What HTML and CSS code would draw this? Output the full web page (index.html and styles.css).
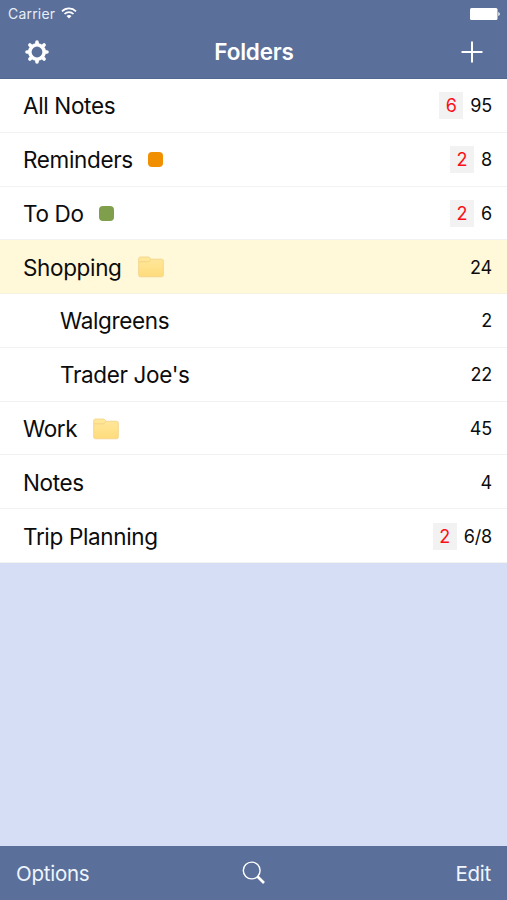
FILE: index.html
```html
<!DOCTYPE html>
<html lang="en">
<head>
<meta charset="utf-8">
<title>Folders</title>
<link rel="stylesheet" href="styles.css">
</head>
<body>
<svg class="defs" width="0" height="0" aria-hidden="true">
  <defs>
    <linearGradient id="folder-fill" x1="0" y1="0" x2="0" y2="1">
      <stop offset="0" stop-color="#ffe89c"/>
      <stop offset="1" stop-color="#ffdc7c"/>
    </linearGradient>
    <symbol id="folder" viewBox="0 0 26 22">
      <path d="M.7 19V2.7Q.7 1 2.4 1H10q1 0 1.600.6L13.200 3.200H23.500Q25.300 3.200 25.300 5V19q0 1.800-1.800 1.800H2.500Q.7 20.800.7 19Z" fill="url(#folder-fill)" stroke="#f3d48a" stroke-width=".9"/>
      <path d="M1 5.800H10.500L13 3.600" fill="none" stroke="#f0cf80" stroke-width=".8"/>
    </symbol>
  </defs>
</svg>
<div class="screen">
  <header class="top">
    <div class="status">
      <span class="carrier">Carrier</span>
      <svg class="wifi" width="16" height="12" viewBox="0 0 16 12" fill="none" stroke="#fff" stroke-width="1.700">
        <path d="M1 4.300a10 10 0 0 1 14 0M3.500 7a6.500 6.500 0 0 1 9 0"/>
        <path d="M5.500 9.100a3.700 3.700 0 0 1 5 0L8 11.600Z" fill="#fff" stroke="none"/>
      </svg>
      <svg class="battery" width="30" height="12" viewBox="0 0 30 12" fill="#fff">
        <rect x="0" y="0" width="27.500" height="12" rx="1.500"/>
        <path d="M28.300 4q1.500.4 1.500 2t-1.500 2Z"/>
      </svg>
    </div>
    <nav class="navbar">
      <svg class="gear" width="24" height="24" viewBox="-12 -12 24 24" fill="none" stroke="#fff">
        <circle r="7.200" stroke-width="3.600"/>
        <path stroke-width="3.600" stroke-linecap="round" d="M0-8V-10M0 8V10M-8 0H-10M8 0H10M5.700-5.700L7.100-7.100M-5.700-5.700L-7.100-7.100M5.700 5.700L7.100 7.100M-5.700 5.700L-7.100 7.100"/>
      </svg>
      <h1 class="title">Folders</h1>
      <svg class="plus" width="22" height="22" viewBox="0 0 22 22" stroke="#fff" stroke-width="2"><path d="M.5 11H21.500M11 .5V21.500"/></svg>
    </nav>
  </header>
  <main class="list">
    <div class="row"><span class="name">All Notes</span><span class="badge">6</span><span class="count">95</span></div>
    <div class="row"><span class="name">Reminders</span><i class="dot orange"></i><span class="badge">2</span><span class="count">8</span></div>
    <div class="row"><span class="name">To Do</span><i class="dot green"></i><span class="badge">2</span><span class="count">6</span></div>
    <div class="row selected"><span class="name">Shopping</span><svg class="folder"><use href="#folder"/></svg><span class="count">24</span></div>
    <div class="row child"><span class="name">Walgreens</span><span class="count">2</span></div>
    <div class="row child"><span class="name">Trader Joe's</span><span class="count">22</span></div>
    <div class="row"><span class="name">Work</span><svg class="folder"><use href="#folder"/></svg><span class="count">45</span></div>
    <div class="row"><span class="name">Notes</span><span class="count">4</span></div>
    <div class="row"><span class="name">Trip Planning</span><span class="badge">2</span><span class="count">6/8</span></div>
  </main>
  <footer class="toolbar">
    <span class="options">Options</span>
    <svg class="search" width="24" height="24" viewBox="0 0 24 24" fill="none" stroke="#fff">
      <circle cx="9.700" cy="9.500" r="8.400" stroke-width="1.400"/>
      <path d="M15.500 15.500L22 22" stroke-width="2.600"/>
    </svg>
    <span class="edit">Edit</span>
  </footer>
</div>
</body>
</html>
```
FILE: styles.css
```css
* { box-sizing: border-box; }
body { margin: 0; font-family: Inter, "Liberation Sans", sans-serif; color: #0c0c0c; }
.defs { position: absolute; }
.screen { width: 507px; height: 900px; display: flex; flex-direction: column; background: #d6def5; }
.top { height: 79px; background: #5a6f99; color: #fff; border-bottom: 1px solid #536891; }
.status { height: 27px; display: flex; align-items: center; padding: 0 7px 0 8px; }
.carrier { font-size: 14px; letter-spacing: .2px; color: #e8edf8; }
.wifi { margin-left: 6px; margin-top: -2px; }
.battery { margin-left: auto; }
.navbar { height: 49px; display: grid; grid-template-columns: 1fr auto 1fr; align-items: center; padding: 0 24px 0 25px; }
.title { margin: 0; font-size: 22.5px; font-weight: 600; letter-spacing: -.2px; }
.plus { justify-self: end; }
.list { display: grid; grid-template-rows: repeat(9, 1fr); height: 484px; background: #fff; }
.row { display: flex; align-items: center; padding: 1px 15px 0 23px; border-bottom: 1px solid #f2f2f3; }
.row.child { padding-left: 60px; }
.row.selected { background: #fff8d9; border-color: #f5f2e2; }
.name { font-size: 22.5px; letter-spacing: -.35px; white-space: nowrap; }
.dot { width: 15px; height: 15px; border-radius: 4px; margin-left: 15px; }
.orange { background: #f09000; }
.green { background: #7f9f4d; }
.folder { width: 26px; height: 22px; margin-left: 16px; }
.badge { margin-left: auto; width: 24px; height: 27px; background: #f2f2f2; color: #fb1018; font-size: 18px; line-height: 27px; text-align: center; }
.count { margin-left: auto; font-size: 18px; letter-spacing: -.2px; }
.badge + .count { margin-left: 7px; }
.toolbar { margin-top: auto; height: 54px; background: #5a6f99; color: #eef5ff; display: grid; grid-template-columns: 1fr auto 1fr; align-items: center; padding: 1px 16px 0; font-size: 20.5px; letter-spacing: -.25px; }
.search { margin-top: -2px; }
.edit { justify-self: end; }
```
